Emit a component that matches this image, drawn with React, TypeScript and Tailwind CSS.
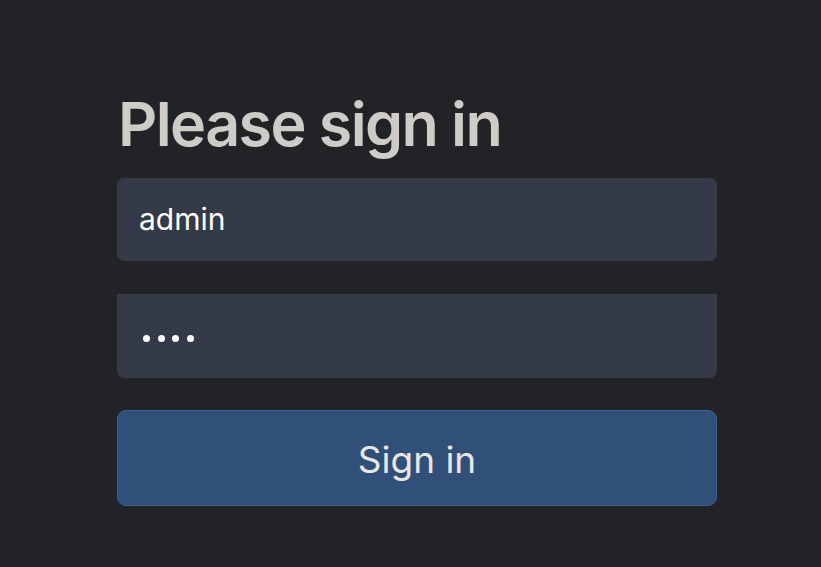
export default function App() {
  return (
    <div className="w-[821px] h-[567px] bg-[#222326] overflow-hidden" style={{ fontFamily: "Inter, 'Noto Sans', sans-serif" }}>
      <div className="pt-[86px] pl-[117px] w-[717px]">
        <h1 className="text-[61px] leading-[76px] font-semibold text-[#cfccc8] tracking-[-1.6px] mb-[16px] ml-[1px]">Please sign in</h1>
        <div className="h-[83px] bg-[#343a47] border border-[#3a3b3d] rounded-[7px] flex items-center pl-[21px] text-[30px] text-white">admin</div>
        <div className="h-[84px] mt-[33px] bg-[#343a47] border border-[#3a3b3d] rounded-b-[7px] flex items-center pl-[25px] pt-[5px] text-white">
          <div className="flex gap-[7.5px]">
            <span className="w-[7px] h-[7px] rounded-full bg-white"></span>
            <span className="w-[7px] h-[7px] rounded-full bg-white"></span>
            <span className="w-[7px] h-[7px] rounded-full bg-white"></span>
            <span className="w-[7px] h-[7px] rounded-full bg-white"></span>
          </div>
        </div>
        <button className="mt-[32px] w-full h-[96px] bg-[#304f79] border border-[#3a5f91] rounded-[9px] text-[37px] text-[#e8e6e3] pt-[4px]">Sign in</button>
      </div>
    </div>
  );
}
